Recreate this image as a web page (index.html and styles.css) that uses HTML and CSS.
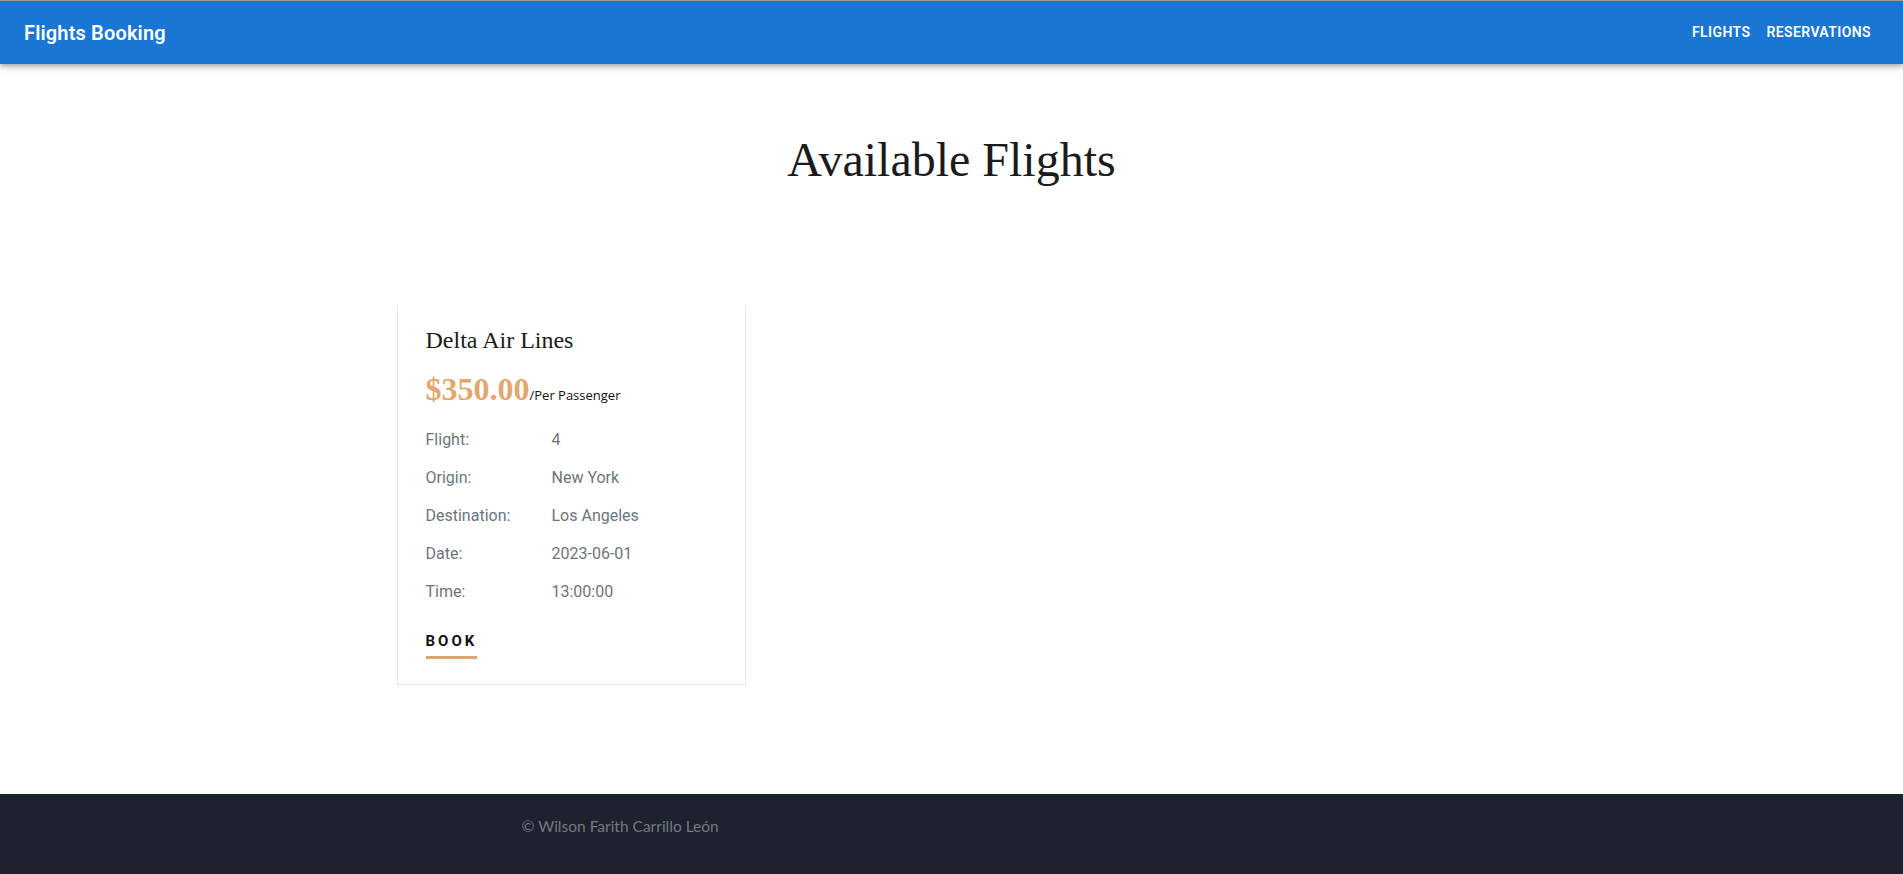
FILE: index.html
```html
<!DOCTYPE html>
<html lang="en">
<head>
<meta charset="utf-8">
<title>Flights Booking</title>
<link rel="stylesheet" href="styles.css">
</head>
<body>
<div class="page">
  <header class="appbar">
    <div class="brand">Flights Booking</div>
    <nav class="nav">
      <a class="nav-btn" href="#">Flights</a>
      <a class="nav-btn" href="#">Reservations</a>
    </nav>
  </header>
  <main class="main">
    <h1 class="page-title">Available Flights</h1>
    <div class="container">
      <div class="card">
        <h3 class="card-title">Delta Air Lines</h3>
        <p class="price"><span class="price-amount">$350.00</span><span class="price-unit">/Per Passenger</span></p>
        <ul class="details">
          <li class="row"><span class="label">Flight:</span><span class="value">4</span></li>
          <li class="row"><span class="label">Origin:</span><span class="value">New York</span></li>
          <li class="row"><span class="label">Destination:</span><span class="value">Los Angeles</span></li>
          <li class="row"><span class="label">Date:</span><span class="value">2023-06-01</span></li>
          <li class="row"><span class="label">Time:</span><span class="value">13:00:00</span></li>
        </ul>
        <a class="book" href="#">Book</a>
      </div>
    </div>
  </main>
  <footer class="footer">
    <div class="footer-inner">© Wilson Farith Carrillo León</div>
  </footer>
</div>
</body>
</html>
```

FILE: styles.css
```css
* { box-sizing: border-box; }
html, body { margin: 0; padding: 0; }
body {
  font-family: Roboto, "Liberation Sans", sans-serif;
  background: #fff;
  color: #212529;
}
.page {
  min-height: 100vh;
  display: flex;
  flex-direction: column;
}
.appbar {
  height: 64px;
  border-top: 1px solid #9a9a9a;
  background: #1976d2;
  color: #fff;
  display: flex;
  align-items: center;
  justify-content: space-between;
  padding: 0 24px;
  box-shadow: 0 2px 4px -1px rgba(0,0,0,0.2), 0 4px 5px 0 rgba(0,0,0,0.14), 0 1px 10px 0 rgba(0,0,0,0.12);
  position: relative;
  z-index: 2;
}
.brand {
  font-size: 20px;
  font-weight: 600;
  letter-spacing: 0.0075em;
}
.nav { display: flex; }
.nav-btn {
  color: #fff;
  text-decoration: none;
  text-transform: uppercase;
  font-size: 14px;
  font-weight: 600;
  letter-spacing: 0.02857em;
  padding: 6px 8px;
  line-height: 1.75;
}
.main { flex: 1; }
.page-title {
  font-family: "Liberation Serif", serif;
  font-weight: 400;
  font-size: 48px;
  line-height: 1.2;
  text-align: center;
  margin: 67px 0 0;
  color: #1b1b1b;
}
.container {
  width: 1110px;
  margin: 0 auto;
  padding-top: 115px;
}
.card {
  width: 349px;
  border: 1px solid #e8e8e8;
  border-top-color: transparent;
  padding: 21px 28px 25px;
}
.card-title {
  font-family: "Liberation Serif", serif;
  font-weight: 400;
  font-size: 24px;
  line-height: 1.2;
  margin: 0 0 16px;
  color: #1b1b1b;
}
.price {
  margin: 0 0 12px;
  line-height: 1.2;
}
.price-amount {
  font-family: "Liberation Serif", serif;
  font-weight: 700;
  font-size: 32px;
  color: #e2a76f;
}
.price-unit {
  font-family: "Open Sans", sans-serif;
  font-size: 13px;
  color: #111;
}
.details {
  list-style: none;
  margin: 0;
  padding: 0;
}
.row {
  display: flex;
  height: 38px;
  align-items: center;
  font-size: 16px;
  color: #6c757d;
}
.label { width: 126px; }
.book {
  display: inline-block;
  margin-top: 21px;
  font-size: 15px;
  font-weight: 700;
  letter-spacing: 3px;
  text-transform: uppercase;
  color: #111;
  text-decoration: none;
  padding-bottom: 6px;
  border-bottom: 3px solid #dfa46d;
}
.footer {
  height: 80px;
  background: #1e2130;
}
.footer-inner {
  width: 860px;
  margin: 0 auto;
  padding-top: 23px;
  font-family: Lato, "Open Sans", sans-serif;
  font-size: 15.5px;
  color: #77787e;
}
```
